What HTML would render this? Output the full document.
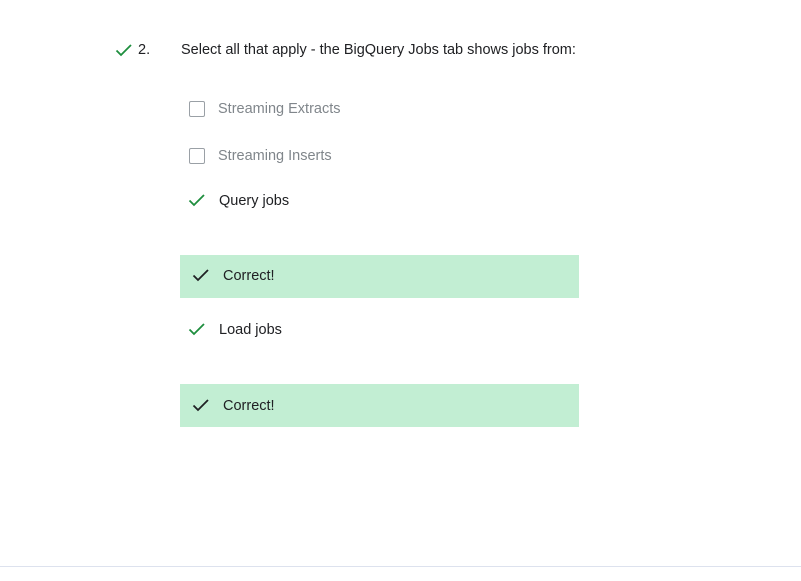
<!DOCTYPE html>
<html><head><style>
body{margin:0;width:801px;height:581px;background:#fff;position:relative;font-family:"Liberation Sans",sans-serif;font-size:14.5px;color:#202124;overflow:hidden}
.a{position:absolute;white-space:nowrap}
.box{position:absolute;border:1px solid #9aa0a6;border-radius:2px;box-sizing:border-box;width:16px;height:16px}
.gray{color:#80868b}
.fb{position:absolute;left:180px;width:399px;height:43px;background:#c2eed3}
svg{position:absolute}
</style></head><body>
<svg style="left:115px;top:42px" width="18" height="16" viewBox="0 0 18 16"><path d="M1.5 8.5l4.5 4.5 10-10" fill="none" stroke="#1e8e3e" stroke-width="1.8"/></svg>
<div class="a" style="left:138px;top:42px">2.</div>
<div class="a" style="left:181px;top:42px">Select all that apply - the BigQuery Jobs tab shows jobs from:</div>
<div class="box" style="left:189px;top:101px"></div>
<div class="a gray" style="left:218px;top:101px">Streaming Extracts</div>
<div class="box" style="left:189px;top:148px"></div>
<div class="a gray" style="left:218px;top:148px">Streaming Inserts</div>
<svg style="left:188px;top:192px" width="18" height="16" viewBox="0 0 18 16"><path d="M1.5 8.5l4.5 4.5 10-10" fill="none" stroke="#1e8e3e" stroke-width="1.8"/></svg>
<div class="a" style="left:219px;top:193px">Query jobs</div>
<div class="fb" style="top:255px"></div>
<svg style="left:192px;top:267px" width="18" height="16" viewBox="0 0 18 16"><path d="M1.5 8.5l4.5 4.5 10-10" fill="none" stroke="#202124" stroke-width="1.8"/></svg>
<div class="a" style="left:223px;top:268px">Correct!</div>
<svg style="left:188px;top:321px" width="18" height="16" viewBox="0 0 18 16"><path d="M1.5 8.5l4.5 4.5 10-10" fill="none" stroke="#1e8e3e" stroke-width="1.8"/></svg>
<div class="a" style="left:219px;top:322px">Load jobs</div>
<div class="fb" style="top:384px"></div>
<svg style="left:192px;top:397px" width="18" height="16" viewBox="0 0 18 16"><path d="M1.5 8.5l4.5 4.5 10-10" fill="none" stroke="#202124" stroke-width="1.8"/></svg>
<div class="a" style="left:223px;top:398px">Correct!</div>
<div style="position:absolute;left:0;top:566px;width:801px;height:1px;background:#dde2ee"></div>
</body></html>
